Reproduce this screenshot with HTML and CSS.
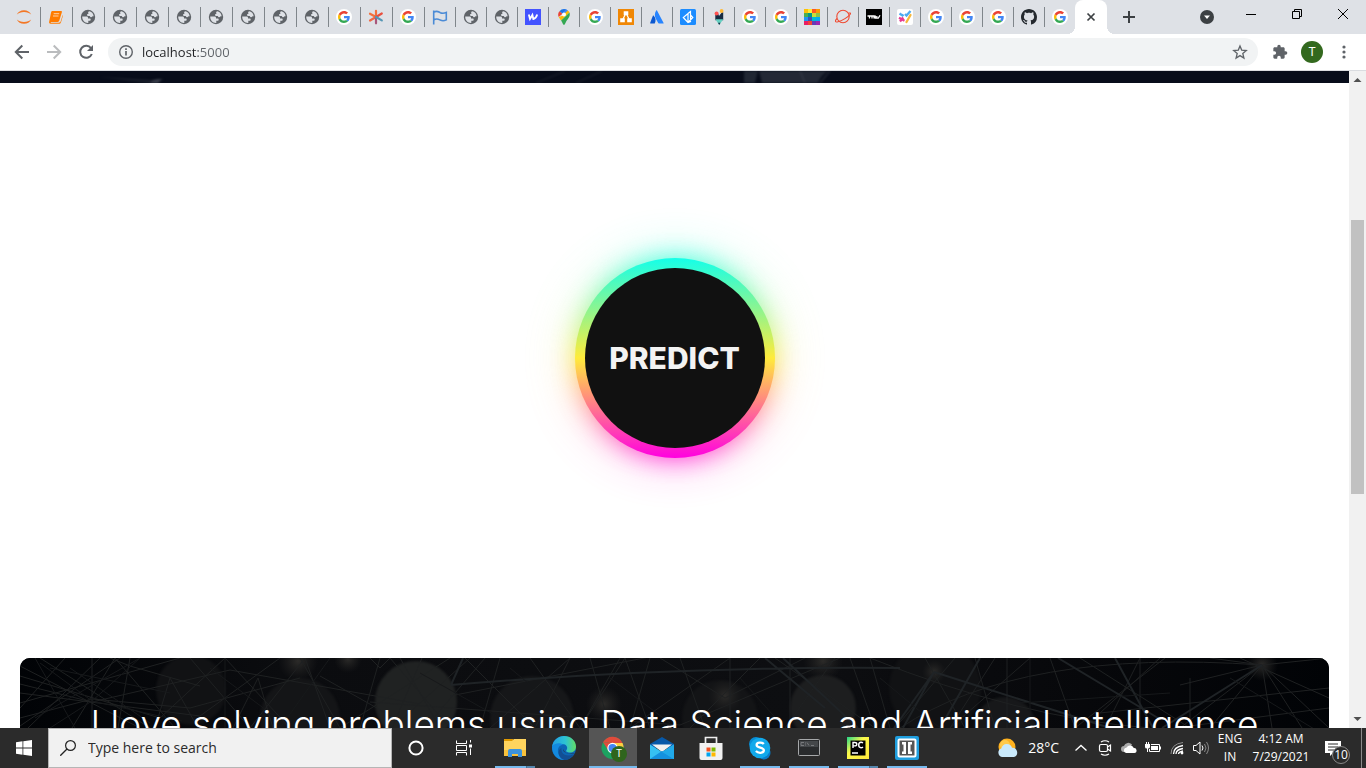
FILE: index.html
```html
<!DOCTYPE html>
<html lang="en">
<head>
<meta charset="utf-8">
<meta name="viewport" content="width=device-width, initial-scale=1">
<title>localhost:5000</title>
<link rel="stylesheet" href="styles.css">
</head>
<body>
<svg class="sprite" aria-hidden="true">
  <symbol id="globe" viewBox="0 0 16 16">
    <circle cx="8" cy="8" r="7.200" fill="#5f6368"/>
    <path d="M2.200 7.500h4.200c1 0 1.600.5 1.600 1.400v.7h1.600c.8 0 1.100.5 1.100 1.100s-.5 1.100-1.200 1.100H8.300v2.100C5 14.100 2.200 11.800 2.200 7.500Z" fill="#dee1e6"/>
    <path d="M9.500 2.300c-1.300.2-1.600 1-1.200 1.700.3.500 0 .9-.7 1.100-1 .3-.8 1.700.3 1.800h1.400c.6 0 .7.500 1.100 1 .5.600 1.400.4 1.700-.1.400-.5 1-.6 1.600-.3C13.600 5 11.900 2.700 9.500 2.300Z" fill="#dee1e6"/>
  </symbol>
  <symbol id="google" viewBox="0 0 16 16">
    <circle cx="8" cy="8" r="8" fill="#fff"/>
    <g transform="translate(2 2) scale(.25)">
      <path fill="#ea4335" d="M24 9.500c3.540 0 6.710 1.220 9.210 3.600l6.850-6.850C35.900 2.380 30.470 0 24 0 14.620 0 6.510 5.380 2.560 13.220l7.980 6.190C12.430 13.720 17.740 9.500 24 9.500z"/>
      <path fill="#4285f4" d="M46.980 24.550c0-1.570-.15-3.090-.38-4.550H24v9.020h12.940c-.58 2.960-2.260 5.480-4.780 7.180l7.730 6c4.510-4.180 7.090-10.360 7.090-17.650z"/>
      <path fill="#fbbc05" d="M10.530 28.590c-.48-1.450-.76-2.990-.76-4.590s.27-3.140.76-4.590l-7.980-6.190C.92 16.460 0 20.120 0 24s.92 7.540 2.560 10.780l7.970-6.190z"/>
      <path fill="#34a853" d="M24 48c6.480 0 11.930-2.130 15.890-5.810l-7.730-6c-2.150 1.450-4.920 2.300-8.160 2.300-6.260 0-11.570-4.220-13.470-9.910l-7.980 6.190C6.510 42.620 14.620 48 24 48z"/>
    </g>
  </symbol>
</svg>

<header class="browser">
  <div class="tabstrip">
    <nav class="tabs" aria-label="Tabs">
      <button class="tab tab-wide" aria-label="Jupyter"><svg viewBox="0 0 16 16"><path d="M.8 5.500C2 2.800 4.700 1.200 8 1.200s6 1.600 7.200 4.300C13.500 4 11 3.100 8 3.100S2.500 4 .8 5.500ZM.8 10.500C2 13.200 4.700 14.800 8 14.800s6-1.600 7.200-4.300C13.500 12 11 12.900 8 12.900S2.500 12 .8 10.500Z" fill="#f37726"/></svg></button>
      <button class="tab tab-wide" aria-label="Notebook"><svg viewBox="0 0 16 16"><path d="M4.500 2h8.300c1 0 1.300.5 1 1.400l-2.500 8.200c-.3 1-.8 1.400-1.700 1.400H2.800v.8h8.300c.8 0 1.200-.4 1.500-1.200l2-6.400c.4 0 .4.400.2 1.100l-1.800 6c-.4 1.100-1 1.500-2 1.500H2.500c-1.200 0-1.700-1-1.300-2.200L3.100 3.200C3.400 2.300 3.800 2 4.500 2Z" fill="#ff7b00"/><path d="M5.700 4.700h5.500M5 7h5.500" stroke="#ffd2a5" stroke-width="1"/></svg></button>
      <button class="tab tab-wide" aria-label="Page"><svg><use href="#globe"/></svg></button>
      <button class="tab tab-wide" aria-label="Page"><svg><use href="#globe"/></svg></button>
      <button class="tab tab-wide" aria-label="Page"><svg><use href="#globe"/></svg></button>
      <button class="tab tab-wide" aria-label="Page"><svg><use href="#globe"/></svg></button>
      <button class="tab tab-wide" aria-label="Page"><svg><use href="#globe"/></svg></button>
      <button class="tab tab-wide" aria-label="Page"><svg><use href="#globe"/></svg></button>
      <button class="tab tab-wide" aria-label="Page"><svg><use href="#globe"/></svg></button>
      <button class="tab tab-wide" aria-label="Page"><svg><use href="#globe"/></svg></button>
      <button class="tab tab-wide" aria-label="Google"><svg><use href="#google"/></svg></button>
      <button class="tab tab-wide" aria-label="Asterisk"><svg viewBox="0 0 16 16" fill="none" stroke-width="2.200" stroke-linecap="round"><path d="M8 8V1.800M8 8 2 4.700" stroke="#f2703c"/><path d="M8 8l5.800-3.500" stroke="#e8503f"/><path d="M8 8l-6 3.500" stroke="#ef6a45"/><path d="M8 8v6.300" stroke="#a8567a"/><path d="M8 8l5.800 3.400" stroke="#5596b4"/></svg></button>
      <button class="tab tab-wide" aria-label="Google"><svg><use href="#google"/></svg></button>
      <button class="tab" aria-label="Flag"><svg viewBox="0 0 16 16" fill="none" stroke="#4b8bd6" stroke-width="1.600"><path d="M1.700 1.500v14M2 3c3-1.500 4.500-.2 6.300.7 2 .9 3.700.8 6-.3v7.500c-2.300 1.100-4 1.100-6 .2C6.500 10.200 5 9.200 2 10.700"/></svg></button>
      <button class="tab" aria-label="Page"><svg><use href="#globe"/></svg></button>
      <button class="tab" aria-label="Page"><svg><use href="#globe"/></svg></button>
      <button class="tab" aria-label="W"><svg viewBox="0 0 16 16"><path d="M0 0h16v16H0z" fill="#4353ff"/><path d="M3.800 5.500 5 10l2.400-4 .9 4c1.900-.4 3.200-2 3.900-4.500" fill="none" stroke="#fff" stroke-width="1.800"/></svg></button>
      <button class="tab" aria-label="Maps"><svg viewBox="0 0 16 16"><path d="M8 0a5.700 5.700 0 0 0-4.500 2.200L8 6l3.500-4.800A6 6 0 0 0 8 0Z" fill="#1a73e8"/><path d="M3.500 2.200a5.500 5.500 0 0 0-.8 5.800L6.400 4.700Z" fill="#ea4335"/><path d="m11.400 1.200-4.800 5.600L2.700 8c.6 1.300 1.500 2.300 2.400 3.500l8.400-8c-.4-1-1.100-1.800-2.100-2.300Z" fill="#fbbc04"/><path d="M13.500 3.500 5.100 11.500C6.500 13.200 7 16 8 16s1.400-2.400 2.600-4.200C12 9.700 14.700 7.500 13.500 3.500Z" fill="#34a853"/><path d="M9.700 0.400 6 4.800l2-.8 3.800-2.300A6 6 0 0 0 9.700.4Z" fill="#4285f4"/><circle cx="8" cy="5.600" r="2" fill="#fff"/></svg></button>
      <button class="tab" aria-label="Google"><svg><use href="#google"/></svg></button>
      <button class="tab" aria-label="Diagrams"><svg viewBox="0 0 16 16"><path d="M0 0h16v16H0z" fill="#f08705"/><path d="M8 4 4.500 11M8 4l3.500 7" stroke="#fff" stroke-width="1.200"/><path d="M5.700 2.300h4.600v4H5.700zM2.200 9.300h4.600v4H2.200zM9.200 9.300h4.600v4H9.200z" fill="#fff"/></svg></button>
      <button class="tab" aria-label="Atlassian"><svg viewBox="0 0 16 16"><path d="M4.700 6.800c-.3-.3-.7-.3-.9.100L1.100 14c-.1.300.1.500.4.500h4.200c1.400-2.500 1.200-5.500-1-7.700Z" fill="#0b57d0"/><path d="M7.200 1.600c-1.700 2.800-1.700 5.400-.5 7.800l2.500 4.700c.1.300.4.400.7.400h4.300c.4 0 .5-.3.400-.6L8 1.600c-.2-.4-.6-.4-.8 0Z" fill="#2684ff"/></svg></button>
      <button class="tab" aria-label="Source"><svg viewBox="0 0 16 16"><rect width="16" height="16" rx="1.500" fill="#1c8cff"/><path d="m8 4.500 2.500-2v10L8 13.500 3.300 8.500 8 4.500v7.700M8 13.500l4.800-5L10.500 6" fill="none" stroke="#fff" stroke-width="1.200"/></svg></button>
      <button class="tab" aria-label="Pencil"><svg viewBox="0 0 16 16"><path d="M4.300 5h3L8 7l3-3.700h1.200v8H4.300Z" fill="#172b42"/><circle cx="5.600" cy="4.600" r="2" fill="#ff5252"/><circle cx="10.600" cy="2" r="1.900" fill="#ffb938"/><path d="M4.300 10.300h7.900L8.200 16Z" fill="#65cfc1"/><path d="m7 13.800 1.200 2.200 1.300-2.200Z" fill="#172b42"/></svg></button>
      <button class="tab" aria-label="Google"><svg><use href="#google"/></svg></button>
      <button class="tab" aria-label="Google"><svg><use href="#google"/></svg></button>
      <button class="tab" aria-label="Colours"><svg viewBox="0 0 16 16" shape-rendering="crispEdges"><path fill="#ffc107" d="M0 0h4v4H0z"/><path fill="#ffeb3b" d="M4 0h4v4H4z"/><path fill="#ff5722" d="M8 0h4v4H8z"/><path fill="#ff9800" d="M12 0h4v4h-4z"/><path fill="#4caf50" d="M0 4h4v4H0z"/><path fill="#009688" d="M4 4h4v4H4z"/><path fill="#cddc39" d="M8 4h4v4H8z"/><path fill="#8bc34a" d="M12 4h4v4h-4z"/><path fill="#2196f3" d="M0 8h4v4H0z"/><path fill="#3f51b5" d="M4 8h4v4H4z"/><path fill="#00bcd4" d="M8 8h4v4H8z"/><path fill="#03a9f4" d="M12 8h4v4h-4z"/><path fill="#e91e63" d="M0 12h4v4H0z"/><path fill="#f44336" d="M4 12h4v4H4z"/><path fill="#673ab7" d="M8 12h4v4H8z"/><path fill="#9c27b0" d="M12 12h4v4h-4z"/></svg></button>
      <button class="tab" aria-label="Planet"><svg viewBox="0 0 16 16" fill="none" stroke="#ef4a32" stroke-width="1.100"><circle cx="8" cy="7.500" r="6.200"/><path d="M2 9.500C-.5 12 0 13.500 3 12.800c4-.9 10.500-5 12.200-7.500.8-1.300-.3-1.600-1.800-1.200"/></svg></button>
      <button class="tab" aria-label="TNW"><svg viewBox="0 0 16 16"><path d="M0 0h16v16H0z" fill="#000"/><path d="M1.500 7h4M3.500 7v2.500M6 9.500V7h2v2.500M9.300 6.500v2.700h1.500V7M10.800 9.200h1.500l1.700-3" fill="none" stroke="#fff" stroke-width="1.300"/></svg></button>
      <button class="tab" aria-label="Tasks"><svg viewBox="0 0 16 16" fill="none"><rect width="16" height="16" rx="2" fill="#fff"/><path d="m2.500 4.500 3 2 1-1M8 5l1.500 1.500L13.500 2" stroke="#4dabf0" stroke-width="2.300"/><path d="m2 8.700 5.500 3M3 12.500l3.200-4" stroke="#e83b91" stroke-width="2.300"/><path d="M9.500 13 13.500 6" stroke="#f6b73c" stroke-width="2.300" stroke-linecap="round"/></svg></button>
      <button class="tab" aria-label="Google"><svg><use href="#google"/></svg></button>
      <button class="tab" aria-label="Google"><svg><use href="#google"/></svg></button>
      <button class="tab" aria-label="Google"><svg><use href="#google"/></svg></button>
      <button class="tab" aria-label="GitHub"><svg viewBox="0 0 16 16"><path fill="#24292e" d="M8 0C3.580 0 0 3.580 0 8c0 3.540 2.290 6.530 5.470 7.590.4.070.55-.17.55-.38 0-.19-.01-.82-.01-1.490-2.010.37-2.530-.49-2.690-.94-.09-.23-.48-.94-.82-1.130-.28-.15-.68-.52-.01-.53.63-.01 1.080.58 1.230.82.72 1.210 1.870.87 2.330.66.07-.52.28-.87.51-1.070-1.780-.2-3.640-.89-3.640-3.950 0-.87.31-1.590.82-2.150-.08-.2-.36-1.020.08-2.120 0 0 .67-.21 2.200.82.64-.18 1.320-.27 2-.27s1.360.09 2 .27c1.530-1.040 2.200-.82 2.200-.82.44 1.100.16 1.920.08 2.120.51.560.82 1.270.82 2.150 0 3.070-1.870 3.750-3.650 3.950.29.250.54.730.54 1.480 0 1.070-.01 1.930-.01 2.200 0 .21.15.46.55.38A8.010 8.010 0 0 0 16 8c0-4.420-3.580-8-8-8Z"/></svg></button>
      <button class="tab tab-last" aria-label="Google"><svg><use href="#google"/></svg></button>
      <button class="tab tab-active" aria-label="Close tab"><svg viewBox="0 0 16 16"><path d="m4.500 4.500 7 7m0-7-7 7" stroke="#3c4043" stroke-width="1.700"/></svg></button>
    </nav>
    <button class="new-tab" aria-label="New tab"><svg viewBox="0 0 14 14"><path d="M7 1v12M1 7h12" stroke="#3c4043" stroke-width="2"/></svg></button>
    <div class="window-controls">
      <button class="tab-search" aria-label="Search tabs"><svg viewBox="0 0 14 14"><circle cx="7" cy="7" r="7" fill="#3c4043"/><path d="M4 5.500h6L7 9Z" fill="#fff"/></svg></button>
      <button aria-label="Minimize"><svg viewBox="0 0 12 12"><path d="M1 6.500h10" stroke="#000"/></svg></button>
      <button aria-label="Restore"><svg viewBox="0 0 12 12"><path d="M1.500 3.500h7v7h-7zM3.500 3.500v-2h7v7h-2" fill="none" stroke="#000"/></svg></button>
      <button aria-label="Close"><svg viewBox="0 0 12 12"><path d="m1 1 10 10m0-10L1 11" stroke="#000"/></svg></button>
    </div>
  </div>
  <div class="toolbar">
    <button class="tool" aria-label="Back"><svg viewBox="0 0 16 16" fill="none" stroke="#5f6368" stroke-width="2"><path d="M15 8H2M8.300 1.500 1.800 8l6.500 6.500"/></svg></button>
    <button class="tool" aria-label="Forward"><svg viewBox="0 0 16 16" fill="none" stroke="#babcbe" stroke-width="2"><path d="M1 8h13M7.700 1.500 14.200 8l-6.500 6.500"/></svg></button>
    <button class="tool" aria-label="Reload"><svg viewBox="0 0 16 16"><path d="M13 4.200A6 6 0 1 0 13.800 10" fill="none" stroke="#5f6368" stroke-width="2"/><path d="M15 1v6H9Z" fill="#5f6368"/></svg></button>
    <div class="omnibox">
      <button aria-label="Site information"><svg viewBox="0 0 16 16"><circle cx="8" cy="8" r="6.300" fill="none" stroke="#5f6368" stroke-width="1.400"/><path d="M8 7v4.500M8 4.200V6" stroke="#5f6368" stroke-width="1.700"/></svg></button>
      <input class="address" type="text" value="localhost:5000" aria-label="Address">
      <button aria-label="Bookmark"><svg viewBox="0 0 16 16"><path d="m8 1.900 1.700 4.200 4.600.4-3.500 3 1.100 4.500L8 11.600 4.100 14l1.100-4.500-3.500-3 4.600-.4Z" fill="none" stroke="#5f6368" stroke-width="1.300"/></svg></button>
    </div>
    <button class="tool" aria-label="Extensions"><svg viewBox="0 0 24 24"><path fill="#5f6368" d="M20.500 11H19V7c0-1.100-.9-2-2-2h-4V3.500a2.500 2.500 0 0 0-5 0V5H4c-1.100 0-2 .9-2 2v3.800h1.500a2.700 2.700 0 0 1 0 5.400H2V20c0 1.100.9 2 2 2h3.800v-1.500a2.700 2.700 0 0 1 5.400 0V22H17c1.100 0 2-.9 2-2v-4h1.500a2.500 2.500 0 0 0 0-5Z"/></svg></button>
    <button class="tool"><span class="avatar">T</span></button>
    <button class="tool" aria-label="Menu"><svg viewBox="0 0 16 16" fill="#5f6368"><circle cx="8" cy="3" r="1.600"/><circle cx="8" cy="8" r="1.600"/><circle cx="8" cy="13" r="1.600"/></svg></button>
  </div>
</header>

<div class="viewport">
  <main class="page">
    <div class="banner">
      <svg viewBox="0 0 1349 12" preserveAspectRatio="xMidYMid slice" aria-hidden="true">
        <defs><filter id="soft" color-interpolation-filters="sRGB"><feGaussianBlur stdDeviation="1"/></filter></defs>
        <g filter="url(#soft)"><path d="M100 6l50 3 14-1-8 4h-8Z" fill="#1a1f2c"/><path d="M150 12q2-4 12-4l-4 4Z" fill="#3b404c"/><path d="M744 0h14l-3 12h-11Z" fill="#202633"/><path d="M759 0h69q-7 4-10 12h-56Z" fill="#232835"/><path d="M536 12 565 0M576 12l26-12" stroke="#1d222e" fill="none"/><path d="m820 12 10-12M800 0l5 12" stroke="#3a3f4b" fill="none"/></g>
      </svg>
    </div>
    <section class="hero">
      <button class="predict"><span class="glow glow-far"></span><span class="glow glow-near"></span><span class="ring"></span><span class="predict-label">PREDICT</span></button>
    </section>
    <section class="card">
      <svg class="network" viewBox="0 0 1309 150" preserveAspectRatio="xMidYMin slice" aria-hidden="true">
        <defs><filter id="haze" color-interpolation-filters="sRGB"><feGaussianBlur stdDeviation="1"/></filter><radialGradient id="spot"><stop offset="0" stop-color="#2c2b29"/><stop offset="1" stop-color="#202020" stop-opacity="0"/></radialGradient><linearGradient id="shade"><stop offset="0" stop-color="#010306"/><stop offset=".2" stop-color="#0b0c0f"/><stop offset=".6" stop-color="#0d0e11"/><stop offset=".85" stop-color="#06070a"/><stop offset="1" stop-color="#010306"/></linearGradient></defs>
        <path d="M0 0h1309v150H0z" fill="url(#shade)"/>
        <g filter="url(#haze)"><circle cx="171" cy="32" r="35" fill="#111214"/><circle cx="280" cy="60" r="40" fill="#141517"/><circle cx="396" cy="44" r="41" fill="#202222"/><circle cx="512" cy="60" r="42" fill="#161719"/><circle cx="700" cy="60" r="38" fill="#131416"/><circle cx="803" cy="50" r="33" fill="#1d1e1f"/><circle cx="915" cy="30" r="46" fill="#111214"/><circle cx="985" cy="70" r="31" fill="#17181a"/></g>
        <g fill="url(#spot)"><circle cx="278" cy="3" r="20"/><circle cx="328" cy="1" r="14"/><circle cx="584" cy="46" r="18"/><circle cx="705" cy="38" r="17"/><circle cx="803" cy="3" r="20"/><circle cx="914" cy="14" r="12"/><circle cx="1242" cy="7" r="16"/></g>
        <g fill="none" stroke="#1f2122" stroke-width="1">
          <path d="M0 8 120 70M0 26 72 44 210 12 400 46M0 45 160 0M0 68 100 0M8 70 80 0M20 0 130 70M45 0 0 50M72 0v70M0 18 140 60 205 0 270 70M0 60 72 41 170 50 280 20M52 70 95 0l60 70M110 0l-12 70M135 70l15-50 28 50M0 35l180 23L260 0M170 0l60 70 55-70 25 70M213 70l25-50 15 50M280 0l40 70M300 18l80 45 70-63M90 0l20 8 70 20"/>
          <path d="M360 0 340 70M380 0l40 70M402 0l-30 70M350 0l10 10 10-10 60 70M430 0 320 70M445 0l70 70 35-70M465 0l-60 70M480 0l-20 70M510 0l50 70 45-70 25 70M430 38l230-45M350 44l310 23L820 0M550 0l-80 70M570 0l20 70M600 0l-40 70M630 0l-20 70 100-70M640 0l65 40 80-40M660 0l25 70M710 0v70M740 0l-70 70M755 0l100 70M770 0v70M815 0l-50 70M830 0l25 70M850 0l20 70"/>
          <path d="M850 0Q1000 60 1130 70M875 70 935 0M905 0l40 70M955 0l20 70M975 0l-45 70M987 0v70M1010 0l-80 70M1030 0l25 70 90-70M1060 0l110 70M1085 70l35-70M1120 0v70M1140 0l-60 55L1309 30M1160 70l82-63-82 20M1170 70V20M1190 0l52 7 67 63M1242 7l67-7M1242 7l-52 63M1242 7l10 63M1242 7l40 63M1242 7Q1000-10 880 70M1220 0l89 40M1309 50l-155 20"/>
        </g>
        <g fill="none" stroke="#1f2326" stroke-width="2"><path d="M431 27 443 0M431 27Q650 8 880 10M745 0l60 50M763 0l75 70M914 14l-40 56M914 14 883 70M914 14 1090 70M1095 0l38 70M1038 0l100 60M1242 7l-100 63M960 0l-40 70"/></g>
        <g fill="none" stroke="#17191b"><path d="M15 0 55 70M30 10l120 25M72 43 20 5M72 43 30 70M72 43l90 20M72 43 120 0M190 10l80 60M310 0l-50 70M400 15 480 60M490 10 550 60M590 20l60 45M720 20l40 45M860 20l60 50M1000 45l150-10M1010 0v70M1210 20l99 60M50 10l80 55M120 0 15 60M205 0v70"/></g>
      </svg>
      <h1 class="headline">I love solving problems using Data Science and Artificial Intelligence</h1>
    </section>
  </main>
  <div class="scrollbar" aria-hidden="true">
    <svg viewBox="0 0 17 17"><path d="M4.500 11h8l-4-4Z" fill="#505050"/></svg>
    <div class="track"><div class="thumb"></div></div>
    <svg viewBox="0 0 17 17"><path d="M4.500 6h8l-4 4Z" fill="#505050"/></svg>
  </div>
</div>

<footer class="taskbar">
  <button class="task" aria-label="Start"><svg viewBox="0 0 16 16" fill="#fff"><path d="M0 2.200 6.500 1.300v6.300H0ZM7.300 1.200 16 0v7.600H7.300ZM0 8.400h6.500v6.300L0 13.800ZM7.300 8.400H16V16l-8.700-1.200Z"/></svg></button>
  <label class="search"><svg viewBox="0 0 16 16"><circle cx="10.500" cy="5.500" r="4.900" fill="none" stroke="#222" stroke-width="1.200"/><path d="m7 9-6.700 6.700" stroke="#222" stroke-width="1.300"/></svg><input type="text" placeholder="Type here to search" aria-label="Type here to search"></label>
  <button class="task" aria-label="Cortana"><svg viewBox="0 0 16 16"><circle cx="8" cy="8" r="6.600" fill="none" stroke="#fff" stroke-width="2"/></svg></button>
  <button class="task" aria-label="Task view"><svg viewBox="0 0 16 16" fill="none" stroke="#fff"><path d="M.5.500v3h10v-3M.5 5.500h10v5H.5zM.5 15.500v-3h10v3M14.500 0v2.500M14.500 8.500V15"/><path d="M13 4.500h3v3h-3z" fill="#fff" stroke="none"/></svg></button>
  <nav class="apps" aria-label="Applications">
    <button class="task running stacked" aria-label="File Explorer"><svg class="app-icon" viewBox="0 0 24 24"><path d="M1 3h9l2 3H1Z" fill="#e19a00"/><path d="M1 5h8l2-2h12v17H1Z" fill="#ffd45e"/><path d="M1 14h22v6H1Z" fill="#f8c13c"/><path d="M5 21v-6q0-2 2-2h10q2 0 2 2v6h-4v-3H9v3Z" fill="#3d93dc"/></svg></button>
    <button class="task" aria-label="Edge"><svg class="app-icon" viewBox="0 0 24 24"><defs><linearGradient id="wave" x2="1"><stop stop-color="#229ce3"/><stop offset=".55" stop-color="#2cc3d4"/><stop offset="1" stop-color="#62dc65"/></linearGradient></defs><circle cx="12" cy="12" r="12" fill="#0c65b5"/><path d="M0 11C1 4 6 0 12 0c7 0 12 5 12 10.500 0 4-3 6-6 6s-4.500-1.300-3.600-2.300c2-2.500.3-6.200-4.400-6.200C5.500 8 1.500 8.500 0 11Z" fill="url(#wave)"/><path d="M0 11c2-4 8-4.800 11-2.200-4 .4-5.500 4-5 7 .6 4 3.800 7.400 7.500 8.100C6 25 0 19 0 11Z" fill="#1389df"/><path d="M9.500 12c-1 6 5 9.500 12.300 6.200C19 22 16 24 12.500 24 6 22.500 4.500 14 9.500 12Z" fill="#124f94"/><path d="M11 13c.1 3.700 5.300 6 12 3.900-2.300 1.300-7 1.500-9.500-.4-1.500-1.300-2-2.300-2.500-3.500Z" fill="#2b2b2b"/></svg></button>
    <button class="task running current" aria-label="Chrome"><svg class="app-icon" viewBox="0 0 24 24"><circle cx="11.500" cy="12" r="11" fill="#1ca261"/><path d="M2 6.300A11 11 0 0 1 21.500 7H11Z" fill="#e04b3b"/><path d="M2 6.300 7 14l4.500-7Z" fill="#e04b3b"/><path d="M21.500 7a11 11 0 0 1-9.400 16l5-9-5.600-7Z" fill="#ffcd40"/><circle cx="11.500" cy="12" r="5.200" fill="#fff"/><circle cx="11.500" cy="12" r="4" fill="#4285f4"/></svg><span class="badge">T</span></button>
    <button class="task" aria-label="Mail"><svg class="app-icon" viewBox="0 0 24 24"><path d="m0 8 12-7 12 7v4H0Z" fill="#0758a8"/><path d="M2 8.500h20L12 16Z" fill="#f1f1f1"/><path d="M0 8.500 12 16 24 8.500V23H0Z" fill="#36c1f3"/><path d="m0 23 12-8 12 8Z" fill="#1591df"/><path d="m12 16 12-7.500V23Z" fill="#21a9e9"/></svg></button>
    <button class="task" aria-label="Microsoft Store"><svg class="app-icon" viewBox="0 0 24 24"><path d="M6.500 7V1.500h11V7" fill="none" stroke="#eee" stroke-width="1.700"/><path d="M.5 7h23v15q0 2-2 2h-19q-2 0-2-2Z" fill="#f1f1f1"/><path fill="#f25022" d="M7.500 11.500h4v4h-4z"/><path fill="#7fba00" d="M12.500 11.500h4v4h-4z"/><path fill="#00a4ef" d="M7.500 16.500h4v4h-4z"/><path fill="#ffb900" d="M12.500 16.500h4v4h-4z"/></svg></button>
    <button class="task running" aria-label="Skype"><svg class="app-icon" viewBox="0 0 24 24"><circle cx="8" cy="8" r="7" fill="#078dd5"/><circle cx="16" cy="17" r="6.500" fill="#087cca"/><circle cx="12" cy="12" r="10.300" fill="#11a9eb"/><path d="M15.800 8c-1.700-2-7.200-2-7.200.9 0 3.300 7.300 2 7.300 5.200 0 3.500-6 3.300-8 1" fill="none" stroke="#fff" stroke-width="2.300"/></svg></button>
    <button class="task running" aria-label="Command Prompt"><svg class="app-icon" viewBox="0 0 24 24"><rect x="1.500" y="3.500" width="21" height="16" rx="1" fill="#292b2d" stroke="#a6a8aa"/><path d="M3 5h18v6H3Z" fill="#44474a"/><path d="M7 6.500H4v3h3M8.500 6.500v1m0 1v1M10 6.500l2 3M14 9.500h3" fill="none" stroke="#77797c"/></svg></button>
    <button class="task running stacked" aria-label="PyCharm"><svg class="app-icon" viewBox="0 0 24 24"><defs><linearGradient id="py" x2="1" y2="1"><stop stop-color="#21d789"/><stop offset=".4" stop-color="#fcf84a"/><stop offset="1" stop-color="#ffe83b"/></linearGradient></defs><path d="M1 1h22v22H1z" fill="url(#py)"/><path d="M4.500 4.500h15v15h-15z" fill="#000"/><path d="M7 12V6.500h1.800q2 0 2 1.700t-2 1.700H7M17 7q-1-.8-2-.7-2.300.2-2.300 2.700T15 11.700q1.200 0 2-.7M6 17h6" fill="none" stroke="#fff" stroke-width="1.400"/></svg></button>
    <button class="task running" aria-label="Brackets"><svg class="app-icon" viewBox="0 0 24 24"><rect width="24" height="24" rx="2" fill="#1f9ede"/><rect x="3.500" y="3.500" width="17" height="17" rx="1" fill="#555" stroke="#fff" stroke-width="2"/><path d="M11 6v12H7v-2.500h1.500v-7H7V6ZM13 6v12h4v-2.500h-1.500v-7H17V6Z" fill="#fff"/><path d="M11.500 5h1v14h-1z" fill="#555"/></svg></button>
  </nav>
  <div class="tray">
    <button class="weather"><svg viewBox="0 0 22 20"><circle cx="10" cy="9" r="8.500" fill="#ffb21f"/><circle cx="8" cy="7" r="5" fill="#ffca4c"/><path d="M5 19a4.500 4.500 0 0 1-.5-8.700A5.500 5.500 0 0 1 15 9.700 4.800 4.800 0 0 1 17 19Z" fill="#c9e9fc"/></svg><span>28°C</span></button>
    <button class="tray-icon" aria-label="Show hidden icons"><svg viewBox="0 0 16 16"><path d="m2.500 10.500 5.500-5 5.500 5" fill="none" stroke="#fff" stroke-width="1.300"/></svg></button>
    <button class="tray-icon" aria-label="Meet Now"><svg viewBox="0 0 16 16" fill="none" stroke="#fff" stroke-width="1.200"><rect x="2.500" y="4.500" width="8" height="7" rx="1.500"/><path d="M10.500 7 13.500 5v6l-3-2M4 2Q8-.5 12 2M4 14q4 2.500 8 0"/></svg></button>
    <button class="tray-icon" aria-label="OneDrive"><svg viewBox="0 0 16 16"><path d="M3 12a3 3 0 0 1 0-6 4.700 4.700 0 0 1 8-1.500L7 12Z" fill="#aaa"/><path d="M5 13a2.800 2.800 0 0 1 .6-5.500 4 4 0 0 1 7.200.5 2.500 2.500 0 0 1 .5 5Z" fill="#fff"/></svg></button>
    <button class="tray-icon" aria-label="Battery"><svg viewBox="0 0 16 16"><path d="M6 4.500h8.500v7H4.500V9" fill="none" stroke="#fff"/><path d="M6 6h7v4H6zM15 6.500h1v3h-1zM0 4h5v3q0 1.500-2 1.500V12H2V8.500Q0 8.500 0 7ZM1 2h1v2H1zM3 2h1v2H3z" fill="#fff"/></svg></button>
    <button class="tray-icon" aria-label="Network"><svg viewBox="0 0 16 16" fill="none"><path d="M2 14Q2 4 14 2.500" stroke="#8f8f8f"/><path d="M4.500 14q0-7 9.500-8.500M7 14q0-4.500 7-5.500M9.500 14q0-2 4.500-3" stroke="#fff" stroke-width="1.300"/><circle cx="13" cy="13" r="1.400" fill="#fff"/></svg></button>
    <button class="tray-icon" aria-label="Volume"><svg viewBox="0 0 16 16" fill="none" stroke="#fff"><path d="M.5 5.500h2.500l4-3.500v12l-4-3.500H.5ZM9 5.500q2 2.500 0 5"/><path d="M11.500 4q3 4 0 8M13.500 2q4 6 0 12" stroke="#888"/></svg></button>
    <button class="language"><span>ENG</span><span>IN</span></button>
    <button class="clock"><span>4:12 AM</span><span>7/29/2021</span></button>
    <button class="notices" aria-label="Notifications"><svg viewBox="0 0 18 18"><path d="M1 2h16v12H9l-3 3v-3H1Z" fill="#fff"/><path d="M4 5h10M4 8h10M4 11h6" stroke="#2b2b2b"/></svg><span class="count">10</span></button>
    <button class="desktop" aria-label="Show desktop"></button>
  </div>
</footer>
</body>
</html>
```
FILE: styles.css
```css
* { box-sizing: border-box; }
body {
  margin: 0;
  height: 100vh;
  display: flex;
  flex-direction: column;
  overflow: hidden;
  background: #fff;
  font-family: "Open Sans", "Noto Sans", sans-serif;
}
button {
  border: 0;
  padding: 0;
  background: none;
  color: inherit;
  font: inherit;
  display: flex;
  align-items: center;
  justify-content: center;
}
svg { width: 16px; height: 16px; flex: none; }
.sprite { display: none; }

/* Browser frame */
.browser { flex: none; border-bottom: 1px solid #dadce0; }
.tabstrip { display: flex; height: 34px; padding-left: 9px; background: #dee1e6; }
.tabs { display: flex; }
.tab {
  width: 31px;
  padding-left: 7px;
  justify-content: flex-start;
  background: linear-gradient(#80868b, #80868b) right 7px / 1px 20px no-repeat;
}
.tab-wide { width: 32px; }
.tab-last { width: 30px; background: none; }
.tab-active {
  width: 32px;
  padding-left: 8px;
  background: #fff;
  border-radius: 8px 8px 0 0;
  position: relative;
}
.tab-active::before, .tab-active::after {
  content: "";
  position: absolute;
  bottom: 0;
  width: 8px;
  height: 8px;
}
.tab-active::before { right: 100%; background: radial-gradient(circle at 0 0, #dee1e6 8px, #fff 8px); }
.tab-active::after { left: 100%; background: radial-gradient(circle at 100% 0, #dee1e6 8px, #fff 8px); }
.new-tab { width: 28px; margin-left: 8px; }
.new-tab svg { width: 14px; height: 14px; }
.window-controls { display: flex; margin-left: auto; }
.window-controls button { width: 46px; height: 28px; }
.window-controls svg { width: 12px; height: 12px; }
.window-controls .tab-search { width: 42px; height: 34px; }
.window-controls .tab-search svg { width: 14px; height: 14px; }
.toolbar { display: flex; align-items: center; height: 36px; padding: 0 6px; background: #fff; }
.tool { width: 32px; height: 32px; }
.omnibox {
  flex: 1;
  display: flex;
  align-items: center;
  gap: 8px;
  height: 28px;
  margin: 0 6px;
  padding: 0 10px;
  border-radius: 14px;
  background: #f1f3f4;
}
.address {
  flex: 1;
  min-width: 0;
  border: 0;
  padding: 0;
  outline: 0;
  font: 13px/20px "Open Sans", sans-serif;
  color: transparent;
  background: linear-gradient(90deg, #202124 56px, #5f6368 56px);
  -webkit-background-clip: text;
  background-clip: text;
}
.avatar {
  width: 22px;
  height: 22px;
  border-radius: 50%;
  background: #33691e;
  color: #fff;
  font: 12px/22px Roboto, sans-serif;
  text-align: center;
}

/* Page */
.viewport { flex: 1; min-height: 0; display: flex; }
.page { flex: 1; min-width: 0; overflow: hidden; background: #fff; }
.banner { height: 12px; background: #070c1a; }
.banner svg { display: block; width: 100%; height: 12px; }
.hero { display: flex; justify-content: center; padding: 175px 0 200px; }
.predict {
  position: relative;
  isolation: isolate;
  width: 200px;
  height: 200px;
  padding: 10px;
  border-radius: 50%;
}
.ring, .glow {
  position: absolute;
  inset: 0;
  z-index: -1;
  border-radius: 50%;
  background: linear-gradient(#14ffe9, #ffeb3b, #ff00e0);
}
.glow-near { filter: blur(12px); opacity: .8; }
.glow-far { filter: blur(25px); opacity: .4; }
.predict-label {
  width: 100%;
  height: 100%;
  display: grid;
  place-items: center;
  border-radius: 50%;
  background: #111;
  color: #f3f3f3;
  font: 800 30px/40px Inter, sans-serif;
}
.card {
  position: relative;
  margin: 0 20px;
  padding: 40px 20px;
  border-radius: 10px;
  overflow: hidden;
  background: #08090c;
}
.network { position: absolute; inset: 0; width: 100%; height: 100%; }
.headline {
  position: relative;
  margin: 0;
  color: #fff;
  font: 300 37px/52px Inter, sans-serif;
  text-align: center;
  white-space: nowrap;
}
.scrollbar { width: 17px; display: flex; flex-direction: column; background: #f1f1f1; }
.scrollbar svg { width: 17px; height: 17px; }
.track { flex: 1; display: grid; grid-template-rows: 132fr 274fr 217fr; padding: 0 2px; }
.thumb { grid-row: 2; background: #c1c1c1; }

/* Taskbar */
.taskbar { flex: none; display: flex; height: 40px; background: #2b2b2b; color: #fff; }
.task { width: 48px; position: relative; }
.search {
  width: 344px;
  display: flex;
  align-items: center;
  gap: 12px;
  padding: 0 11px;
  border: 1px solid #b5b5b5;
  background: #f1f1f1;
}
.search input {
  flex: 1;
  min-width: 0;
  border: 0;
  padding: 0;
  outline: 0;
  background: none;
  font: 14px/20px "Open Sans", sans-serif;
}
.search input::placeholder { color: #2b2b2b; opacity: 1; }
.apps { display: flex; gap: 1px; margin-left: 3px; }
.app-icon { width: 24px; height: 24px; }
.running::after {
  content: "";
  position: absolute;
  left: 4px;
  right: 4px;
  bottom: 0;
  height: 2px;
  background: #76b9ed;
}
.stacked::after { background: linear-gradient(90deg, #76b9ed 31px, #4a6f8c 31px 32px, #5586ad 32px); }
.current { background: #555; }
.current::after { left: 0; right: 0; }
.badge {
  position: absolute;
  right: 10px;
  bottom: 6px;
  width: 16px;
  height: 16px;
  border-radius: 50%;
  background: #2f651d;
  font: 10px/16px Roboto, sans-serif;
}
.tray { display: flex; margin-left: auto; font-size: 12px; line-height: 18px; }
.weather { gap: 9px; margin-right: 10px; font-size: 14px; }
.weather svg { width: 22px; height: 20px; }
.tray-icon { width: 24px; }
.language, .clock { flex-direction: column; }
.language { width: 34px; }
.clock { width: 68px; }
.notices { position: relative; width: 46px; padding-right: 10px; }
.notices svg { width: 18px; height: 18px; }
.count {
  position: absolute;
  right: 11px;
  bottom: 4px;
  width: 18px;
  height: 18px;
  border: 1px solid #888;
  border-radius: 50%;
  background: #2b2b2b;
  font-size: 12px;
  line-height: 16px;
}
.desktop { width: 5px; border-left: 1px solid #8a8a8a; }
```
